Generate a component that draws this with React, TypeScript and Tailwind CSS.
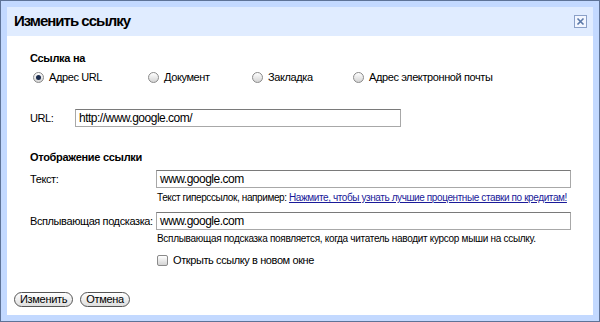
const font = "font-['Liberation_Sans',Arial,sans-serif]";

const Radio = ({ checked, label }: { checked?: boolean; label: string }) => (
  <label className="flex items-center gap-[5px]">
    <span className="w-[11px] h-[11px] rounded-full border border-[#8a8a8a] bg-gradient-to-b from-[#ffffff] to-[#d4d4d4] flex items-center justify-center">
      {checked && <span className="w-[5px] h-[5px] rounded-full bg-[#1a2b4d]" />}
    </span>
    <span>{label}</span>
  </label>
);

const Field = ({ value, className }: { value: string; className: string }) => (
  <div
    className={`h-[18px] border border-[#a8a8a8] border-t-[#7a7a7a] bg-white px-[3px] text-[12px] leading-[16px] tracking-[-0.5px] text-black ${className}`}
  >
    {value}
  </div>
);

const Button = ({ label }: { label: string }) => (
  <button className="h-[15px] px-[5px] rounded-full border border-[#555] bg-gradient-to-b from-[#ffffff] to-[#dedede] text-[11px] leading-[13px] tracking-[-0.3px] text-black">
    {label}
  </button>
);

export default function App() {
  return (
    <div className={`w-[600px] h-[322px] bg-[#5e7397] p-px ${font}`}>
      <div className="w-full h-full bg-[#c3d9ff] px-[6px] pt-[6px] pb-[6px]">
        <div className="h-full flex flex-col">
          <div className="h-[29px] bg-[#e0ecff] flex items-center justify-between pl-[7px] pr-[6px]">
            <span className="text-[15px] font-bold tracking-[-1px] text-black">Изменить ссылку</span>
            <span className="w-[13px] h-[13px] border border-[#8aa0c8] bg-[#f2f6ff] flex items-center justify-center">
              <svg width="9" height="9" viewBox="0 0 9 9">
                <path d="M1.5 1.5 L7.5 7.5 M7.5 1.5 L1.5 7.5" stroke="#5a78a8" strokeWidth="1.6" />
              </svg>
            </span>
          </div>
          <div className="flex-1 bg-white flex flex-col text-[11px] tracking-[-0.4px] text-black">
            <div className="pl-[23px] pt-[15px]">
              <div className="font-bold leading-[14px] tracking-[-0.3px]">Ссылка на</div>
              <div className="flex items-center mt-[5px] pl-[3px] leading-[14px]">
                <div className="w-[115px]"><Radio checked label="Адрес URL" /></div>
                <div className="w-[104px]"><Radio label="Документ" /></div>
                <div className="w-[101px]"><Radio label="Закладка" /></div>
                <Radio label="Адрес электронной почты" />
              </div>
              <div className="flex items-center mt-[25px]">
                <span className="w-[45px]">URL:</span>
                <Field value="http://www.google.com/" className="w-[326px]" />
              </div>
              <div className="font-bold leading-[14px] tracking-[-0.3px] mt-[23px]">Отображение ссылки</div>
              <div className="flex items-center mt-[6px]">
                <span className="w-[126px]">Текст:</span>
                <Field value="www.google.com" className="w-[415px]" />
              </div>
              <div className="pl-[127px] mt-[3px] text-[10px] leading-[13px] tracking-[-0.4px]">
                Текст гиперссылок, например:{' '}
                <a className="text-[#1a1a99] underline">Нажмите, чтобы узнать лучшие процентные ставки по кредитам!</a>
              </div>
              <div className="flex items-center mt-[8px]">
                <span className="w-[126px] whitespace-nowrap">Всплывающая подсказка:</span>
                <Field value="www.google.com" className="w-[415px]" />
              </div>
              <div className="pl-[127px] mt-[2px] text-[10px] leading-[13px] tracking-[-0.3px]">
                Всплывающая подсказка появляется, когда читатель наводит курсор мыши на ссылку.
              </div>
              <label className="flex items-center gap-[5px] pl-[127px] mt-[8px] leading-[14px]">
                <span className="w-[11px] h-[11px] rounded-[2px] border border-[#8a8a8a] bg-gradient-to-b from-[#ffffff] to-[#d4d4d4]" />
                <span>Открыть ссылку в новом окне</span>
              </label>
            </div>
            <div className="mt-auto flex gap-[7px] pl-[7px] pb-[8px]">
              <Button label="Изменить" />
              <Button label="Отмена" />
            </div>
          </div>
        </div>
      </div>
    </div>
  );
}
